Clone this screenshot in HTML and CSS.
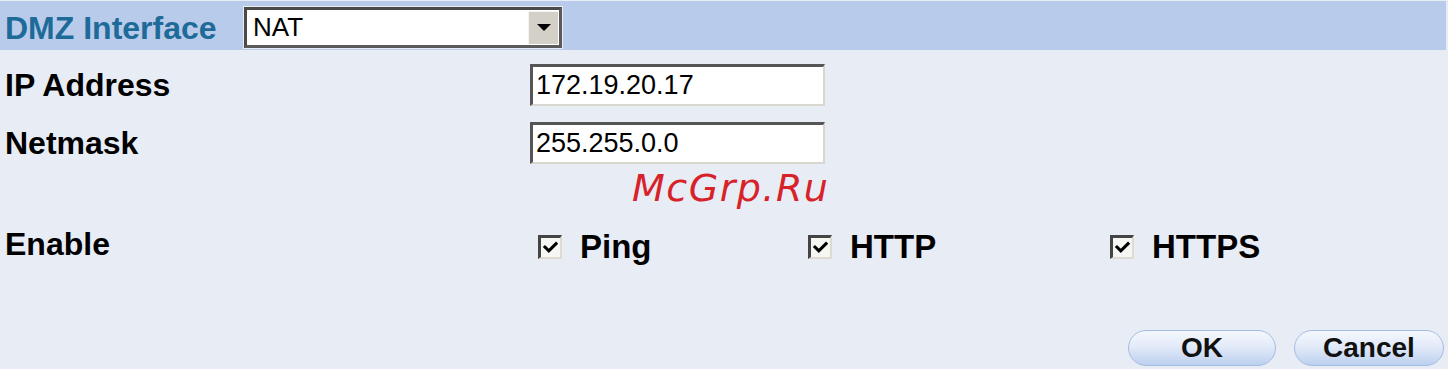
FILE: index.html
```html
<!DOCTYPE html>
<html>
<head>
<meta charset="utf-8">
<link rel="stylesheet" href="styles.css">
</head>
<body>
<div class="page">
  <div class="header">
    <div class="hlabel">DMZ Interface</div>
    <div class="select">
      <span class="select-text">NAT</span>
      <span class="select-btn"><span class="arrow"></span></span>
    </div>
  </div>
  <div class="row row-ip">
    <div class="label">IP Address</div>
    <div class="input">172.19.20.17</div>
  </div>
  <div class="row row-mask">
    <div class="label">Netmask</div>
    <div class="input">255.255.0.0</div>
  </div>
  <div class="row row-enable">
    <div class="label">Enable</div>
    <div class="options">
      <div class="opt opt-ping"><span class="cb"><svg viewBox="0 0 20 20"><path d="M3.5 9.5 L8 14 L16.5 5.5" fill="none" stroke="#000" stroke-width="3.6" stroke-linecap="square"/></svg></span><span class="opt-text">Ping</span></div>
      <div class="opt opt-http"><span class="cb"><svg viewBox="0 0 20 20"><path d="M3.5 9.5 L8 14 L16.5 5.5" fill="none" stroke="#000" stroke-width="3.6" stroke-linecap="square"/></svg></span><span class="opt-text">HTTP</span></div>
      <div class="opt opt-https"><span class="cb"><svg viewBox="0 0 20 20"><path d="M3.5 9.5 L8 14 L16.5 5.5" fill="none" stroke="#000" stroke-width="3.6" stroke-linecap="square"/></svg></span><span class="opt-text">HTTPS</span></div>
    </div>
  </div>
  <div class="actions">
    <div class="btn btn-ok">OK</div>
    <div class="btn btn-cancel">Cancel</div>
  </div>
  <div class="watermark">McGrp.Ru</div>
</div>
</body>
</html>
```

FILE: styles.css
```css
html, body {
  margin: 0;
  padding: 0;
  background: #e8ecf5;
}
.page {
  position: relative;
  width: 1448px;
  height: 369px;
  font-family: "Liberation Sans", Arial, sans-serif;
  color: #000;
  overflow: hidden;
}
.header {
  margin-top: 1px;
  width: 1446px;
  height: 49px;
  background: #b9cbea;
  display: flex;
  align-items: center;
  box-sizing: border-box;
}
.hlabel {
  width: 244px;
  padding-left: 5px;
  padding-top: 5px;
  box-sizing: border-box;
  font-weight: bold;
  font-size: 32px;
  color: #1e6a98;
  white-space: nowrap;
}
.select {
  width: 318px;
  height: 41px;
  margin-top: 3px;
  box-sizing: border-box;
  background: #fff;
  border-top: 3px solid #4a4a4a;
  border-left: 3px solid #4a4a4a;
  border-right: 3px solid #5a5a5a;
  border-bottom: 3px solid #5a5a5a;
  outline: 1px solid #e8ecf5;
  display: flex;
  align-items: center;
  justify-content: space-between;
}
.select-text {
  padding-left: 6px;
  font-size: 26px;
}
.select-btn {
  width: 30px;
  height: 33px;
  margin-right: 1px;
  background: #d4d0c8;
  border-left: 1px solid #f4f4f0;
  border-top: 1px solid #f4f4f0;
  box-sizing: border-box;
  display: flex;
  align-items: center;
  justify-content: center;
}
.arrow {
  width: 0;
  height: 0;
  border-left: 7px solid transparent;
  border-right: 7px solid transparent;
  border-top: 7px solid #000;
}
.row {
  display: grid;
  grid-template-columns: 530px 1fr;
  align-items: center;
}
.row-ip {
  margin-top: 14px;
  height: 42px;
}
.row-mask {
  margin-top: 16px;
  height: 42px;
}
.row-enable {
  margin-top: 64px;
  height: 30px;
}
.label {
  padding-left: 5px;
  font-weight: bold;
  font-size: 32px;
}
.row-enable .label {
  margin-top: -6px;
}
.input {
  width: 295px;
  height: 42px;
  box-sizing: border-box;
  background: #fff;
  border-top: 3px solid #555;
  border-left: 3px solid #555;
  border-right: 2px solid #d8d6ce;
  border-bottom: 2px solid #d8d6ce;
  padding-left: 3px;
  font-size: 27px;
  line-height: 36px;
}
.options {
  display: flex;
  align-items: center;
  padding-left: 8px;
}
.opt {
  display: flex;
  align-items: center;
  gap: 18px;
}
.opt-ping { width: 270px; }
.opt-http { width: 302px; }
.cb {
  width: 24px;
  height: 24px;
  box-sizing: border-box;
  background: #f6f6f2;
  border-top: 3px solid #444;
  border-left: 3px solid #444;
  border-right: 2px solid #dedbd2;
  border-bottom: 2px solid #dedbd2;
  display: flex;
  align-items: center;
  justify-content: center;
}
.cb svg {
  width: 17px;
  height: 17px;
}
.opt-text {
  font-weight: bold;
  font-size: 33px;
}
.actions {
  margin-top: 72px;
  display: flex;
  justify-content: flex-end;
  gap: 18px;
  padding-right: 4px;
}
.btn {
  height: 36px;
  box-sizing: border-box;
  border: 1px solid #a6bde2;
  border-radius: 18px;
  background: linear-gradient(#f4f7fd 0%, #e3ebf9 45%, #bcd0ef 100%);
  font-weight: bold;
  font-size: 28px;
  line-height: 34px;
  text-align: center;
  color: #111;
}
.btn-ok { width: 148px; }
.btn-cancel { width: 150px; }
.watermark {
  position: absolute;
  left: 632px;
  top: 166px;
  font-family: "DejaVu Sans", sans-serif;
  font-style: italic;
  font-size: 38px;
  letter-spacing: 1.5px;
  color: #d7222a;
}
```
